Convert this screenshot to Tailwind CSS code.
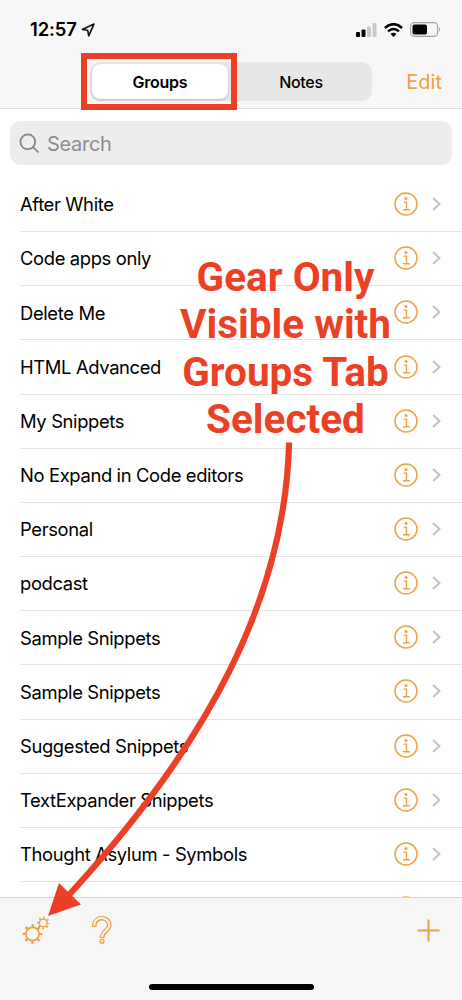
<!DOCTYPE html>
<html lang="en">
<head>
<meta charset="utf-8">
<title>Groups</title>
<script src="https://cdn.jsdelivr.net/npm/@tailwindcss/browser@4"></script>
</head>
<body class="bg-white">
<main class="relative flex h-[1000px] w-[462px] flex-col overflow-hidden bg-white font-['Inter',sans-serif] text-black">
  <header class="h-[109px] shrink-0 border-b border-[#dcdcdc] bg-[#f7f7f7]">
    <div class="flex h-[62px] items-center pb-[3px] pl-[30px] pr-[21px]">
      <span class="w-[47px] whitespace-nowrap text-[18.4px] font-semibold leading-none tracking-[-0.1px]">12:57</span>
      <svg class="ml-[4px] size-[14px]" viewBox="0 0 13 13" fill="none" stroke="#111" stroke-width="1.500" stroke-linejoin="round"><path d="M12 1 L1.200 6 L6.200 6.800 L7.200 12 Z"/></svg>
      <div class="ml-auto flex items-center gap-[7px]">
        <svg class="h-[14px] w-[21px]" viewBox="0 0 21 14"><rect y="9" width="4" height="5" rx="1"/><rect x="5.5" y="6.500" width="4" height="7.500" rx="1"/><rect x="11" y="3.500" width="4" height="10.500" rx="1" fill="#c8c8c8"/><rect x="16.500" width="4" height="14" rx="1" fill="#c8c8c8"/></svg>
        <svg class="h-[14px] w-[19px]" viewBox="0 0 19 14" fill="none" stroke="#000" stroke-width="2.500"><path d="M.9 5 Q9.500 -2.700 18.100 5"/><path d="M4 8.400 Q9.500 3.600 15 8.400"/><path d="M9.500 14 L6.600 11 Q9.500 8.700 12.400 11Z" fill="#000" stroke="none"/></svg>
        <svg class="h-[15px] w-[31px]" viewBox="0 0 31 15"><rect x=".6" y=".6" width="27" height="13.800" rx="3.800" fill="none" stroke="#a0a0a0" stroke-width="1.100"/><rect x="2.500" y="2.500" width="14.500" height="10" rx="1.800"/><path d="M29 5 Q31 7.500 29 10Z" fill="#a0a0a0"/></svg>
      </div>
    </div>
    <div class="flex h-[39px] pl-[90px] pr-5">
      <div class="flex h-full w-[282px] rounded-[10px] bg-[#e7e7e7] p-[2px]">
        <div class="flex h-[35px] w-[136px] items-center justify-center rounded-[8px] bg-white text-[16px] font-semibold tracking-[-0.25px] shadow-[0_1px_3px_rgba(0,0,0,0.22)]"><span>Groups</span></div>
        <div class="flex h-[35px] flex-1 items-center justify-center pl-[4px] text-[16px] font-medium tracking-[-0.3px]"><span>Notes</span></div>
      </div>
      <div class="ml-auto flex items-center text-[20px] text-[#eda044]"><span>Edit</span></div>
    </div>
  </header>
  <div class="mx-[10px] mt-3 flex h-[44px] shrink-0 items-center rounded-[11px] bg-[#ededee] pl-[9px] text-[#8b8b90]">
    <svg class="size-[21px]" viewBox="0 0 21 21" fill="none" stroke="#858589" stroke-width="1.700" stroke-linecap="round"><circle cx="8.800" cy="8.800" r="7.400"/><path d="M14.200 14.200 L19 19"/></svg>
    <span class="ml-[7px] pt-px text-[20px] tracking-[-0.3px]">Search</span>
  </div>
  <div id="list" class="mt-[13px] h-[719px] shrink-0 overflow-hidden text-[18.4px] tracking-[-0.36px]"></div>
  <footer class="flex h-[103px] shrink-0 flex-col border-t border-[#d6d6d6] bg-[#f6f6f6]">
    <div class="flex h-[86px] items-start justify-between pl-[20px] pr-[22px] pt-[16px]">
      <div class="flex gap-[38px]">
      <svg class="size-[32px]" viewBox="20 914 32 32" fill="none" stroke="#eda044">
        <circle cx="32.500" cy="934" r="6.600" stroke-width="1.700"/>
        <circle cx="32.500" cy="934" r="8.400" stroke-width="2.900" stroke-dasharray="2.400 4.197" stroke-dashoffset="1.200"/>
        <circle cx="43.300" cy="923" r="3.900" stroke-width="1.400"/>
        <circle cx="43.300" cy="923" r="5.300" stroke-width="2.200" stroke-dasharray="1.600 2.563" stroke-dashoffset=".8"/>
      </svg>
      <svg class="h-[32px] w-[24px]" viewBox="90 914 24 32" fill="none" stroke-linejoin="round">
        <path d="M94.300 927 C93.500 915.300 109.300 916 109.300 925 C109.300 931 102 930.500 102 938" stroke="#eda044" stroke-width="4.600"/>
        <path d="M94.300 925.900 C93.500 915.300 109.300 916 109.300 925 C109.300 931 102 930.500 102 936.900" stroke="#f6f6f6" stroke-width="2"/>
        <circle cx="102" cy="941.300" r="1.900" stroke="#eda044" stroke-width="1.300"/>
      </svg>
      </div>
      <svg class="mt-[4px] size-[24px]" viewBox="0 0 24 24" stroke="#eda044" stroke-width="2"><path d="M1.500 12.500H23.500M12.500 1.500V23.500"/></svg>
    </div>
    <div class="mx-auto h-[6px] w-[165px] rounded-full bg-black"></div>
  </footer>

  <!-- Annotation layer -->
  <div class="pointer-events-none absolute left-[81px] top-[53px] h-[57px] w-[156px] border-[6px] border-[#ec4026]"></div>
  <div class="absolute left-[135px] top-[254px] w-[301px] text-center font-['Roboto',sans-serif] text-[40.5px] font-bold leading-[47.400px] text-[#ec4026]">Gear Only<br>Visible with<br>Groups Tab<br>Selected</div>
  <svg class="absolute left-0 top-0 h-[1000px] w-[462px]" viewBox="0 0 462 1000"><path d="M289.100 442.500 C285 600 207 745 68 896" fill="none" stroke="#ec4026" stroke-width="6.200"/><path d="M48 916 L59 883 L81 904.500Z" fill="#ec4026"/></svg>
</main>
<script>
  const names = ["After White","Code apps only","Delete Me","HTML Advanced","My Snippets","No Expand in Code editors","Personal","podcast","Sample Snippets","Sample Snippets","Suggested Snippets","TextExpander Snippets","Thought Asylum - Symbols",""];
  document.getElementById("list").innerHTML = names.map(n => `
    <div class="ml-5 flex h-[54.17px] items-center border-b border-[#e3e3e4] pr-[21px]">
      <span class="whitespace-nowrap pt-px">${n}</span>
      <svg class="mb-px ml-auto h-[24px] w-[24px]" viewBox="0 0 24 24" fill="none" stroke="#eda044"><circle cx="12" cy="12" r="11" stroke-width="1.500"/><path d="M9.700 10.100H12.500V17.500M9 17.700H15.800" stroke-width="1.400"/><circle cx="12" cy="6.500" r="1.500" fill="#eda044" stroke="none"/></svg>
      <svg class="mb-px ml-[14px] h-[14px] w-[9px]" viewBox="0 0 9 14" fill="none" stroke="#c2c2c5" stroke-width="2"><path d="M1 1L7.500 7L1 13"/></svg>
    </div>`).join("");
</script>
</body>
</html>
